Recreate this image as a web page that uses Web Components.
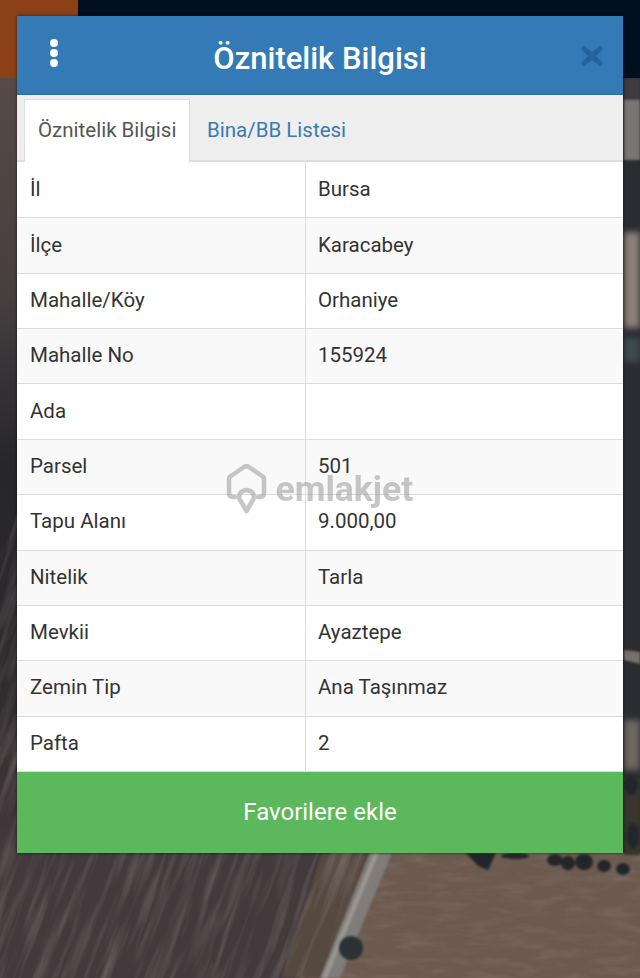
<!DOCTYPE html>
<html lang="tr">
<head>
<meta charset="utf-8">
<title>Öznitelik Bilgisi</title>
<style>
  html, body { margin: 0; padding: 0; height: 100%; }
  body { font-family: Roboto, "Liberation Sans", sans-serif; background: #3c3638; overflow: hidden; }
</style>
</head>
<body>
<map-backdrop></map-backdrop>
<attribute-modal>
  <attribute-row label="İl" value="Bursa"></attribute-row>
  <attribute-row label="İlçe" value="Karacabey"></attribute-row>
  <attribute-row label="Mahalle/Köy" value="Orhaniye"></attribute-row>
  <attribute-row label="Mahalle No" value="155924"></attribute-row>
  <attribute-row label="Ada" value=""></attribute-row>
  <attribute-row label="Parsel" value="501"></attribute-row>
  <attribute-row label="Tapu Alanı" value="9.000,00"></attribute-row>
  <attribute-row label="Nitelik" value="Tarla"></attribute-row>
  <attribute-row label="Mevkii" value="Ayaztepe"></attribute-row>
  <attribute-row label="Zemin Tip" value="Ana Taşınmaz"></attribute-row>
  <attribute-row label="Pafta" value="2"></attribute-row>
</attribute-modal>
<script>
class MapBackdrop extends HTMLElement {
  constructor() {
    super();
    this.attachShadow({ mode: "open" });
  }

  connectedCallback() {
    this.shadowRoot.innerHTML = `
      <style>
        :host { position: absolute; left: 0; top: 0; width: 640px; height: 978px; display: block; }
        svg { display: block; }
      </style>
      <svg width="640" height="978" viewBox="0 0 640 978" aria-hidden="true">
        <defs>
          <linearGradient id="left" x1="0" y1="78" x2="0" y2="853" gradientUnits="userSpaceOnUse">
            <stop offset="0" stop-color="#574a46"/>
            <stop offset=".28" stop-color="#453f40"/>
            <stop offset=".5" stop-color="#26262b"/>
            <stop offset=".78" stop-color="#2f2b2d"/>
            <stop offset="1" stop-color="#423a3c"/>
          </linearGradient>
          <filter id="streaks" x="0" y="0" width="100%" height="100%">
            <feTurbulence type="fractalNoise" baseFrequency=".12 .01" numOctaves="3" seed="7"/>
            <feColorMatrix values="0 0 0 0 .45  0 0 0 0 .4  0 0 0 0 .38  1.8 0 0 0 -.75"/>
          </filter>
          <filter id="dirtnoise" x="0" y="0" width="100%" height="100%">
            <feTurbulence type="fractalNoise" baseFrequency=".03 .12" numOctaves="3" seed="3"/>
            <feColorMatrix values="0 0 0 0 .3  0 0 0 0 .24  0 0 0 0 .22  1.2 0 0 0 -.5"/>
          </filter>
          <filter id="soft"><feGaussianBlur stdDeviation="1.2"/></filter>
          <filter id="softer"><feGaussianBlur stdDeviation="3"/></filter>
          <clipPath id="darkfield"><path d="M0 78 H17 V853 H370 L320 978 H0Z"/></clipPath>
          <clipPath id="dirtfield"><path d="M385 853 H640 V978 H335Z"/></clipPath>
        </defs>

        <rect x="0" y="78" width="30" height="780" fill="url(#left)"/>
        <rect x="610" y="78" width="30" height="780" fill="#2b2b32"/>
        <rect x="0" y="850" width="400" height="128" fill="#423a3c"/>
        <path d="M330 853 L640 853 L640 978 L300 978Z" fill="#6c5a4f"/>
        <path d="M322 978 L370 853 L322 853 L282 978Z" fill="#574840" filter="url(#soft)"/>
        <g clip-path="url(#dirtfield)">
          <rect x="320" y="853" width="320" height="125" filter="url(#dirtnoise)" opacity=".5"/>
        </g>
        <path d="M370 853 L392 853 L340 978 L320 978Z" fill="#807c7a" filter="url(#soft)"/>
        <path d="M374 853 L379 853 L327 978 L322 978Z" fill="#9a9691" filter="url(#soft)"/>

        <g clip-path="url(#darkfield)">
          <rect x="-100" y="-100" width="800" height="1300" transform="rotate(20 320 900)" filter="url(#streaks)" opacity=".35"/>
        </g>

        <g filter="url(#softer)">
          <rect x="624" y="232" width="16" height="96" fill="#8c8079"/>
          <rect x="624" y="338" width="16" height="24" fill="#3e4c4d"/>
          <rect x="624" y="720" width="16" height="50" fill="#6d6860"/>
        </g>
        <g filter="url(#soft)">
          <rect x="624" y="78" width="16" height="22" fill="#3d3b3c"/>
          <rect x="624" y="100" width="16" height="60" fill="#787574"/>
          <path d="M624 650 L640 652 L640 664 L624 660Z" fill="#77706a"/>
          <rect x="624" y="778" width="16" height="77" fill="#38342f"/>
        </g>

        <rect x="0" y="0" width="640" height="78" fill="#020f1e"/>
        <rect x="0" y="0" width="78" height="78" fill="#8b4016"/>

        <g fill="#24282a" filter="url(#soft)">
          <path d="M466 853 L496 853 L488 870 L478 866Z"/>
          <ellipse cx="515" cy="856" rx="14" ry="3"/>
          <ellipse cx="555" cy="860" rx="8" ry="6"/>
          <ellipse cx="568" cy="863" rx="7" ry="7"/>
          <ellipse cx="584" cy="862" rx="9" ry="8"/>
          <ellipse cx="604" cy="866" rx="7" ry="6"/>
          <ellipse cx="623" cy="869" rx="7" ry="6"/>
          <ellipse cx="631" cy="785" rx="7" ry="10"/>
          <ellipse cx="633" cy="836" rx="6" ry="13"/>
        </g>
        <circle cx="351" cy="948" r="12" fill="#2b3334" filter="url(#soft)"/>
      </svg>
    `;
  }
}

class AttributeRow extends HTMLElement {
  constructor() {
    super();
    this.attachShadow({ mode: "open" });
  }

  connectedCallback() {
    this.shadowRoot.innerHTML = `
      <style>
        :host {
          display: grid;
          grid-template-columns: 288px 1fr;
          height: 55.45px;
          box-sizing: border-box;
          border-top: 1px solid #ddd;
          background: #fff;
          color: #333;
          font-size: 20.5px;
          line-height: 26px;
        }
        :host(:first-child) { border-top: 0; }
        :host(:nth-child(even)) { background: #f9f9f9; }
        div { display: flex; align-items: center; padding: 0 13px 2px; }
        .value { border-left: 1px solid #ddd; padding-left: 12px; }
      </style>
      <div class="label">${this.getAttribute("label")}</div>
      <div class="value">${this.getAttribute("value") || ""}</div>
    `;
  }
}

class AttributeModal extends HTMLElement {
  constructor() {
    super();
    this.attachShadow({ mode: "open" });
  }

  connectedCallback() {
    this.shadowRoot.innerHTML = `
      <style>
        :host {
          position: relative;
          display: flex;
          flex-direction: column;
          width: 606px;
          height: 837px;
          margin: 16px 0 0 17px;
          background: #fff;
          box-shadow: 0 0 3px rgba(0, 0, 0, 0.6);
        }
        header {
          display: flex;
          align-items: center;
          justify-content: space-between;
          height: 78px;
          padding: 0 19px 0 33px;
          background: #337ab7;
          color: #fff;
          border-bottom: 1px solid #2e6da4;
        }
        .dots { display: flex; flex-direction: column; gap: 2px; margin-bottom: 4px; }
        .dots i { width: 8px; height: 8px; border-radius: 50%; background: #fff; }
        h1 {
          flex: 1;
          margin: 0;
          padding: 8px 0 0 2px;
          text-align: center;
          font-size: 31px;
          line-height: 36px;
          font-weight: 500;
        }
        .close { display: block; width: 24px; height: 24px; margin-top: 2px; }
        nav {
          display: flex;
          height: 67px;
          box-sizing: border-box;
          padding: 4px 0 0 7px;
          background: #eee;
          border-bottom: 2px solid #ddd;
          font-size: 20.5px;
          white-space: nowrap;
        }
        nav span {
          display: flex;
          align-items: center;
          padding: 0 13px 2px 13px;
          height: 63px;
          box-sizing: border-box;
        }
        .active {
          background: #fff;
          color: #555;
          border: 1px solid #ddd;
          border-bottom: 0;
          width: 166px;
        }
        .link { color: #3a7aae; padding-left: 17px; }
        main { display: flex; flex-direction: column; flex: 1; min-height: 0; }
        button {
          display: block;
          width: 100%;
          height: 82px;
          border: 0;
          border-top: 1px solid #d8e8d8;
          padding: 0 0 2px;
          background: #5cb85c;
          color: #fff;
          font: inherit;
          font-size: 24px;
        }
        .logo {
          position: absolute;
          left: 208.500px;
          top: 448px;
          display: flex;
          align-items: center;
          gap: 9px;
          color: #999;
          opacity: 0.55;
          font-size: 35.5px;
          font-weight: 700;
          line-height: 44px;
        }
        .logo svg { display: block; }
      </style>
      <header>
        <div class="dots"><i></i><i></i><i></i></div>
        <h1>Öznitelik Bilgisi</h1>
        <svg class="close" viewBox="0 0 24 24" aria-label="Kapat">
          <path d="M4 1.5 L12 8 L20 1.5 L23 5 L16 12 L23 19 L20 22.5 L12 16 L4 22.5 L1 19 L8 12 L1 5Z" fill="#23639b"/>
        </svg>
      </header>
      <nav>
        <span class="active">Öznitelik Bilgisi</span>
        <span class="link">Bina/BB Listesi</span>
      </nav>
      <main><slot></slot></main>
      <button>Favorilere ekle</button>
      <div class="logo">
        <svg width="41" height="50" viewBox="0 0 41 50" fill="none" stroke="#999" stroke-width="4.5" stroke-linecap="round" stroke-linejoin="round">
          <path d="M9 33 H7 Q3 33 3 29 V15 Q3 13 5 12 L18 3 Q20.500 1.500 23 3 L36 12 Q38 13 38 15 V29 Q38 33 34 33 H32"/>
          <path d="M20.500 47 L13.500 35 Q12 27 20.500 26 Q29 27 27.500 35Z"/>
        </svg>
        <span>emlakjet</span>
      </div>
    `;
  }
}

customElements.define("map-backdrop", MapBackdrop);
customElements.define("attribute-row", AttributeRow);
customElements.define("attribute-modal", AttributeModal);
</script>
</body>
</html>
